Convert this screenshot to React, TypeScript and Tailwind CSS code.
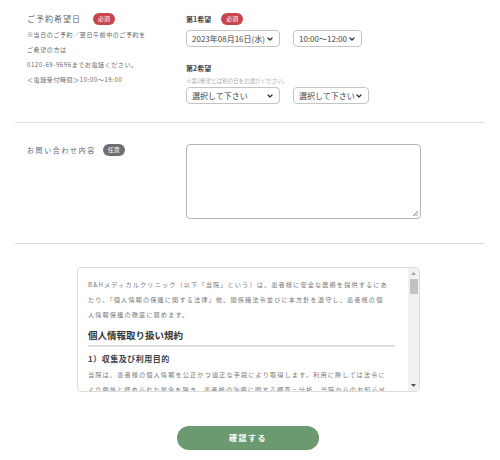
import { ChevronDown } from "lucide-react";

const jp = { fontFamily: '"Noto Sans CJK JP", "Noto Sans", sans-serif' };

const Badge = ({ text, gray }: { text: string; gray?: boolean }) => (
  <span
    className={`inline-flex items-center justify-center h-[12px] w-[22px] rounded-full text-[6px] text-white leading-none ${
      gray ? "bg-[#6f6f6f]" : "bg-[#c8454d]"
    }`}
  >
    {text}
  </span>
);

const FakeSelect = ({ value, width }: { value: string; width: string }) => (
  <div
    className={`flex items-center justify-between h-[17px] ${width} border border-[#c4c4c4] rounded-[4px] pl-[5px] pr-[5px] text-[8px] text-[#444] bg-white`}
  >
    <span className="whitespace-nowrap">{value}</span>
    <ChevronDown size={8} strokeWidth={4} className="text-[#333]" />
  </div>
);

const policyLines = [
  "B&Hメディカルクリニック（以下「当院」という）は、患者様に安全な医療を提供するにあ",
  "たり、「個人情報の保護に関する法律」他、関係諸法令並びに本方針を遵守し、患者様の個",
  "人情報保護の徹底に努めます。",
];

const purposeLines = [
  "当院は、患者様の個人情報を公正かつ適正な手段により取得します。利用に際しては法令に",
  "より例外と認められた場合を除き、患者様の治療に関する調査・分析、当院からのお知らせ",
];

export default function App() {
  return (
    <div className="w-[500px] h-[460px] bg-white overflow-hidden" style={jp}>
      {/* 予約希望日 */}
      <div className="flex pt-[13px] h-[122px]">
        <div className="w-[186px] pl-[27px]">
          <div className="flex items-center gap-[12px] h-[12px]">
            <span className="text-[8px] tracking-[1px] text-[#666]">ご予約希望日</span>
            <Badge text="必須" />
          </div>
          <div className="mt-[2px] text-[6px] tracking-[0.6px] leading-[15px] text-[#666]">
            <p>※当日のご予約／翌日午前中のご予約を</p>
            <p>ご希望の方は</p>
            <p>0120-69-9696までお電話ください。</p>
            <p>＜電話受付時間＞10:00〜19:00</p>
          </div>
        </div>
        <div className="flex-1">
          <div className="flex items-center gap-[10px] h-[12px]">
            <span className="text-[7px] font-bold text-[#444]">第1希望</span>
            <Badge text="必須" />
          </div>
          <div className="flex gap-[13px] mt-[5px]">
            <FakeSelect value="2023年08月16日(水)" width="w-[94px]" />
            <FakeSelect value="10:00〜12:00" width="w-[69px]" />
          </div>
          <p className="mt-[16px] text-[7px] font-bold text-[#444] leading-[10px]">第2希望</p>
          <p className="mt-[4px] text-[5.5px] text-[#aaa] leading-[8px]">※第1希望とは別の日をお選びください。</p>
          <div className="flex gap-[13px] mt-[2px]">
            <FakeSelect value="選択して下さい" width="w-[94px]" />
            <FakeSelect value="選択して下さい" width="w-[76px]" />
          </div>
        </div>
      </div>

      <div className="mx-[15px] h-px bg-[#ddd]" />

      {/* お問い合わせ内容 */}
      <div className="flex pt-[21px] h-[120px]">
        <div className="w-[186px] pl-[27px]">
          <div className="flex items-center gap-[7px] h-[12px]">
            <span className="text-[7px] tracking-[1.6px] text-[#666]">お問い合わせ内容</span>
            <Badge text="任意" gray />
          </div>
        </div>
        <div className="relative w-[235px] h-[75px] border border-[#b5b5b5] rounded-[4px]">
          <svg className="absolute right-[1px] bottom-[1px]" width="7" height="7" viewBox="0 0 7 7">
            <path d="M6 1 L1 6 M6 3.5 L3.5 6" stroke="#777" strokeWidth="0.9" />
          </svg>
        </div>
      </div>

      <div className="mx-[15px] h-px bg-[#ddd]" />

      {/* 個人情報 */}
      <div className="pl-[77px] pt-[23px]">
        <div className="relative w-[343px] h-[125px] border border-[#ddd] rounded-[4px] overflow-hidden">
          <div className="pl-[10px] pr-[24px] pt-[9px]">
            <div className="text-[6.2px] tracking-[1.1px] leading-[15px] text-[#777] whitespace-nowrap">
              {policyLines.map((l) => (
                <p key={l}>{l}</p>
              ))}
            </div>
            <h3 className="mt-[6px] text-[9.5px] font-bold text-[#333] leading-[14px]">個人情報取り扱い規約</h3>
            <div className="mt-[3px] h-[2px] bg-[#ddd]" />
            <h4 className="mt-[6px] text-[8px] font-bold text-[#444] leading-[12px] tracking-[0.5px]">1）収集及び利用目的</h4>
            <div className="mt-[2px] text-[6.2px] tracking-[1.1px] leading-[15px] text-[#777] whitespace-nowrap">
              {purposeLines.map((l) => (
                <p key={l}>{l}</p>
              ))}
            </div>
          </div>
          {/* scrollbar */}
          <div className="absolute top-0 right-0 w-[11px] h-full bg-[#f1f1f1] flex flex-col items-center">
            <svg className="mt-[4px]" width="5" height="3" viewBox="0 0 5 3">
              <path d="M0 3 L2.5 0 L5 3 Z" fill="#a3a3a3" />
            </svg>
            <div className="mt-[4px] w-[8px] h-[15px] bg-[#c1c1c1]" />
            <div className="flex-1" />
            <svg className="mb-[4px]" width="5" height="3" viewBox="0 0 5 3">
              <path d="M0 0 L2.5 3 L5 0 Z" fill="#505050" />
            </svg>
          </div>
        </div>
      </div>

      <div className="pl-[177px] mt-[30px]">
        <button className="w-[142px] h-[24px] rounded-full bg-[#6b9a70] text-white text-[8px] font-bold tracking-[1.5px]">
          確認する
        </button>
      </div>
    </div>
  );
}
